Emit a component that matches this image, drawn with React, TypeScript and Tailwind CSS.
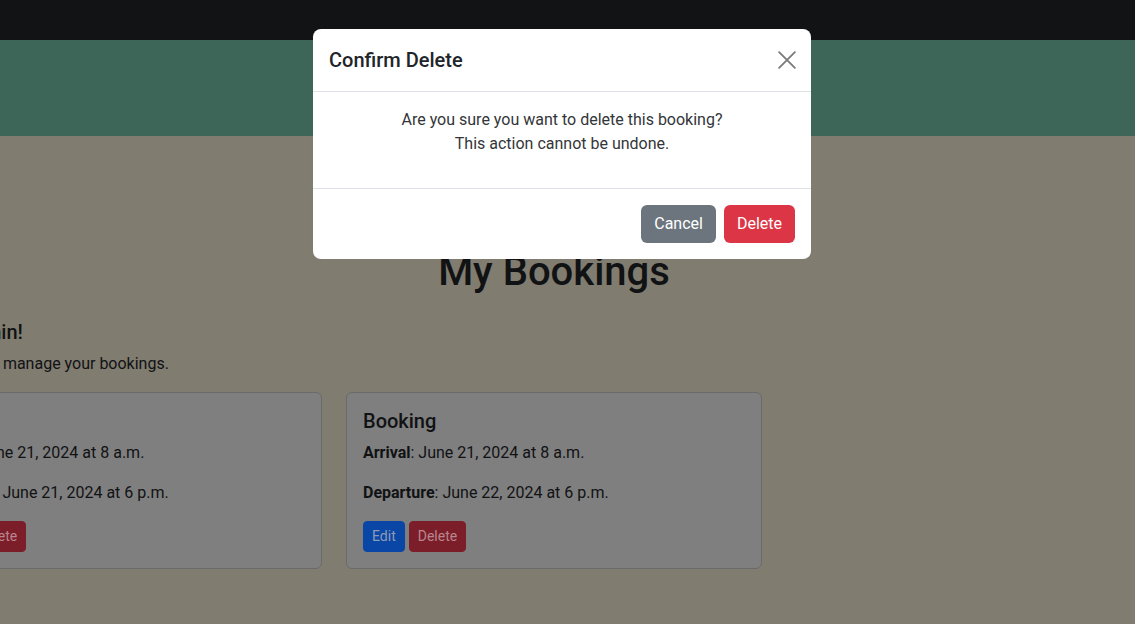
import React from "react";

function Card({ arrival, departure }: { arrival: string; departure: string }) {
  return (
    <div className="w-[440px] shrink-0 px-3">
      <div className="rounded-[6px] border border-[#6a6a6a] bg-[#7f7f7f] p-4">
        <h5 className="mb-2 text-[20px] font-medium leading-[24px] text-[#111214]">Booking</h5>
        <p className="mb-4 text-[16px] leading-[24px] text-[#111214]">
          <strong className="font-bold">Arrival</strong>: {arrival}
        </p>
        <p className="mb-4 text-[16px] leading-[24px] text-[#111214]">
          <strong className="font-bold">Departure</strong>: {departure}
        </p>
        <div className="flex gap-[4px]">
          <button className="h-[31px] rounded-[4px] border border-[#0a46a6] bg-[#0a46a6] px-2 text-[14px] leading-[21px] text-[#8d9bb5]">
            Edit
          </button>
          <button className="h-[31px] rounded-[4px] border border-[#7c1d2a] bg-[#7c1d2a] px-2 text-[14px] leading-[21px] text-[#b9868d]">
            Delete
          </button>
        </div>
      </div>
    </div>
  );
}

export default function App() {
  return (
    <div
      className="relative h-[624px] w-full overflow-hidden bg-[#807c70]"
      style={{ fontFamily: "Roboto, 'Liberation Sans', sans-serif" }}
    >
      <nav className="h-[40px] w-full bg-[#111315]" />
      <header className="h-[96px] w-full bg-[#3d6659]" />

      <main className="ml-[-106px] w-[1320px] px-3">
        <h1 className="mt-[112px] mb-6 text-center text-[40px] font-medium leading-[48px] text-[#111214]">
          My Bookings
        </h1>
        <h5 className="mb-2 text-[20px] font-medium leading-[24px] text-[#111214]">Hello, admin!</h5>
        <p className="mb-4 text-[16px] leading-[24px] text-[#111214]">Here you can manage your bookings.</p>
        <div className="-mx-3 flex">
          <Card arrival="June 21, 2024 at 8 a.m." departure="June 21, 2024 at 6 p.m." />
          <Card arrival="June 21, 2024 at 8 a.m." departure="June 22, 2024 at 6 p.m." />
        </div>
      </main>

      <div className="absolute inset-0">
        <div className="ml-[313px] mt-[29px] w-[498px] rounded-[8px] bg-white">
          <div className="flex h-[63px] items-center justify-between border-b border-[#dee2e6] px-4">
            <h5 className="text-[20px] font-medium leading-[30px] text-[#212529]">Confirm Delete</h5>
            <button className="-mr-[1px] flex h-[18px] w-[18px] items-center justify-center" aria-label="Close">
              <svg width="18" height="18" viewBox="0 0 16 16" fill="none">
                <path d="M1 1L15 15M15 1L1 15" stroke="#7a7a7a" strokeWidth="1.6" strokeLinecap="round" />
              </svg>
            </button>
          </div>
          <div className="border-b border-[#dee2e6] p-4 text-center text-[16px] leading-[24px] text-[#333639]">
            <p className="mb-4">
              Are you sure you want to delete this booking?
              <br />
              This action cannot be undone.
            </p>
          </div>
          <div className="flex justify-end gap-2 px-4 pt-4 pb-4">
            <button className="h-[38px] rounded-[6px] bg-[#6c757d] px-[13px] text-[16px] leading-[24px] text-white">
              Cancel
            </button>
            <button className="h-[38px] rounded-[6px] bg-[#dc3545] px-[13px] text-[16px] leading-[24px] text-white">
              Delete
            </button>
          </div>
        </div>
      </div>
    </div>
  );
}
